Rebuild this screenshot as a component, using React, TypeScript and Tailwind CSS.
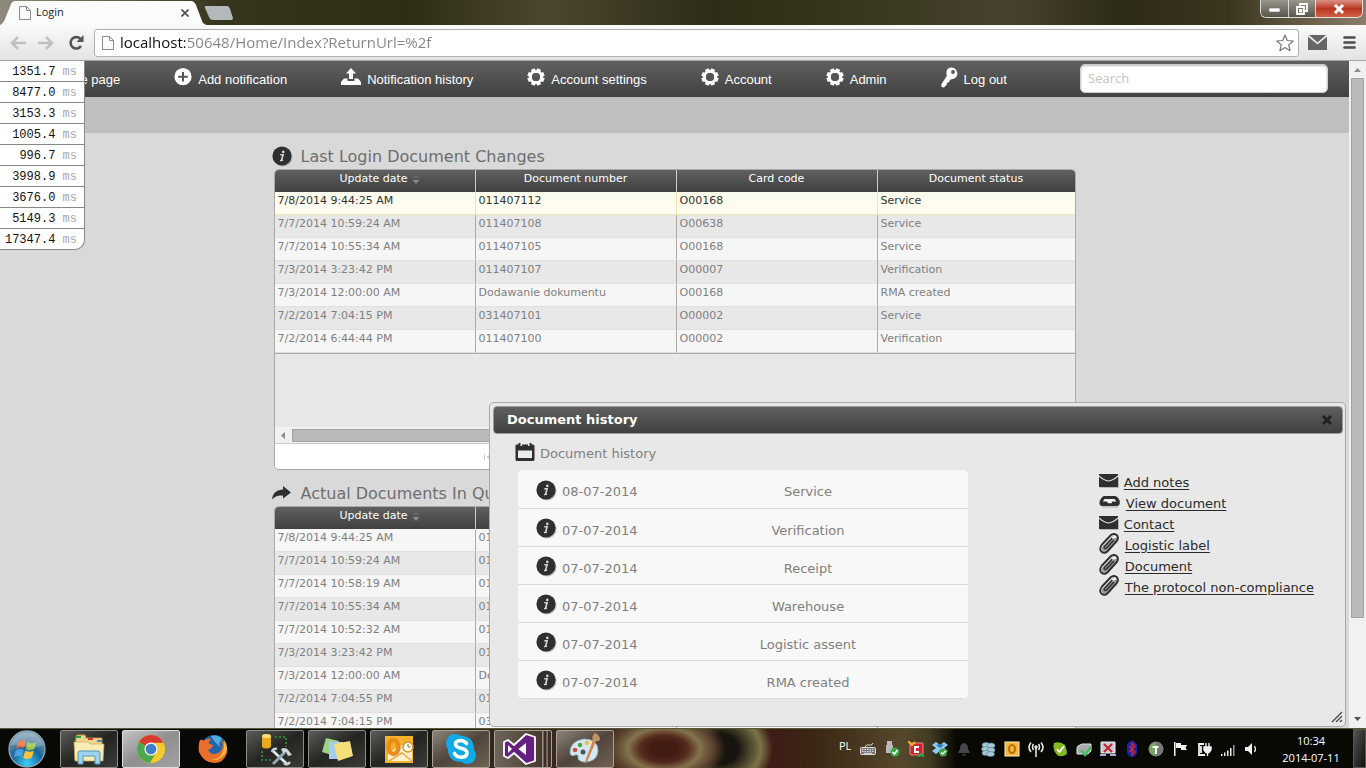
import { useState } from 'react'
import type { ReactNode } from 'react'
import clsx from 'clsx'

interface DocumentRow {
  updated: string
  number: string
  cardCode: string
  status: string
}

const timings = ['1351.7', '8477.0', '3153.3', '1005.4', '996.7', '3998.9', '3676.0', '5149.3', '17347.4']

const lastChanges: DocumentRow[] = [
  { updated: '7/8/2014 9:44:25 AM', number: '011407112', cardCode: 'O00168', status: 'Service' },
  { updated: '7/7/2014 10:59:24 AM', number: '011407108', cardCode: 'O00638', status: 'Service' },
  { updated: '7/7/2014 10:55:34 AM', number: '011407105', cardCode: 'O00168', status: 'Service' },
  { updated: '7/3/2014 3:23:42 PM', number: '011407107', cardCode: 'O00007', status: 'Verification' },
  { updated: '7/3/2014 12:00:00 AM', number: 'Dodawanie dokumentu', cardCode: 'O00168', status: 'RMA created' },
  { updated: '7/2/2014 7:04:15 PM', number: '031407101', cardCode: 'O00002', status: 'Service' },
  { updated: '7/2/2014 6:44:44 PM', number: '011407100', cardCode: 'O00002', status: 'Verification' },
]

const queue: DocumentRow[] = [
  { updated: '7/8/2014 9:44:25 AM', number: '011407112', cardCode: '', status: '' },
  { updated: '7/7/2014 10:59:24 AM', number: '011407108', cardCode: '', status: '' },
  { updated: '7/7/2014 10:58:19 AM', number: '011407108', cardCode: '', status: '' },
  { updated: '7/7/2014 10:55:34 AM', number: '011407105', cardCode: '', status: '' },
  { updated: '7/7/2014 10:52:32 AM', number: '011407105', cardCode: '', status: '' },
  { updated: '7/3/2014 3:23:42 PM', number: '011407107', cardCode: '', status: '' },
  { updated: '7/3/2014 12:00:00 AM', number: 'Dodawanie', cardCode: '', status: '' },
  { updated: '7/2/2014 7:04:55 PM', number: '011407100', cardCode: '', status: '' },
  { updated: '7/2/2014 7:04:15 PM', number: '031407101', cardCode: '', status: '' },
]

const history = [
  { date: '08-07-2014', status: 'Service' },
  { date: '07-07-2014', status: 'Verification' },
  { date: '07-07-2014', status: 'Receipt' },
  { date: '07-07-2014', status: 'Warehouse' },
  { date: '07-07-2014', status: 'Logistic assent' },
  { date: '07-07-2014', status: 'RMA created' },
]

/* ---------- page icons ---------- */

function InfoIcon() {
  return (
    <svg viewBox="0 0 21 21" className="h-[21px] w-[21px] shrink-0">
      <circle cx="11" cy="11" r="9.6" fill="#999" opacity="0.6" />
      <circle cx="10" cy="10" r="9.6" fill="#2e2f31" />
      <circle cx="11.3" cy="5.9" r="1.3" fill="#d9d4cd" />
      <path d="M8.3 8.8h2.8l-1.6 5.5h1.6" fill="none" stroke="#d9d4cd" strokeWidth="1.6" />
      <path d="M8 14.6h1.6" stroke="#d9d4cd" strokeWidth="1.2" />
    </svg>
  )
}

function ShareArrow() {
  return (
    <svg viewBox="0 0 20 16" className="h-4 w-5 shrink-0">
      <path d="M0 14.5C1 7.500 5 4.700 11 4.500V1l8 6.500-8 6V10.500C6 10 3 11 0 14.500z" fill="#2e2f31" />
    </svg>
  )
}

function CalendarIcon() {
  return (
    <svg viewBox="0 0 20 20" className="h-5 w-5 shrink-0">
      <path d="M1 2.500h2.500V1h2v3h1.500V2.500h6V4h1.500V1h2v1.500H18q1.500 0 1.500 1.500v13.500q0 1.500-1.500 1.500H2Q.5 19 .5 17.500V3.500z" fill="#2e2f31" />
      <rect x="3" y="8.500" width="14" height="7.500" fill="#ececec" />
    </svg>
  )
}

function EnvelopeIcon() {
  return (
    <svg viewBox="0 0 20 14" className="-mt-1 h-[14px] w-5 shrink-0">
      <path d="M0 0h19v13H0z" fill="#2e2f31" />
      <path d="M0 2q5 4.500 9.500 5Q14 6.500 19 2" fill="none" stroke="#e0e0e0" strokeWidth="1.100" />
      <path d="M1 13.500h18.500V3" fill="none" stroke="#aaa" strokeWidth="0.800" />
    </svg>
  )
}

function DriveIcon() {
  return (
    <svg viewBox="0 0 22 13" className="-mt-1 h-[13px] w-[22px] shrink-0">
      <path d="M5 1h11q2 0 3.500 2.500Q21 5.500 20.800 8q-.3 3-3 3H3.500Q.3 11 .5 8q0-2.500 1.500-4.500Q3.500 1 5 1z" fill="#2e2f31" />
      <path d="M5.500 4h10l2 2.500h-4l-1 1.700H9L8 6.500H3.800z" fill="#f1f1f1" />
      <path d="M3 12h16" stroke="#aaa" />
    </svg>
  )
}

function PaperclipIcon() {
  return (
    <svg viewBox="0 0 21 21" className="-mt-1 h-[21px] w-[21px] shrink-0" fill="none" strokeLinecap="round" strokeLinejoin="round">
      <path d="M6 15.500L15 6" stroke="#99978f" strokeWidth="6" />
      <path d="M3 11.500l9-9.500Q15-.2 18 2.200q2 3-.2 5.800l-9.500 10.500q-3 2.500-6 0-2.500-3 .7-7z" stroke="#2e2f31" strokeWidth="1.900" />
      <path d="M5 14l8-8.500M14.500 7.500L7.500 15q-1.700 1.200-2.500-1" stroke="#2e2f31" strokeWidth="1.400" />
      <path d="M14 4.500l2-.5" stroke="#fff" strokeWidth="2" />
    </svg>
  )
}

function PlusIcon() {
  return (
    <svg viewBox="0 0 18 18" className="h-[18px] w-[18px]">
      <circle cx="9" cy="8.700" r="8.600" fill="#fff" />
      <path d="M9 4v9.500M4.200 8.700h9.600" stroke="#555" strokeWidth="2" />
    </svg>
  )
}

function UploadIcon() {
  return (
    <svg viewBox="0 0 20 18" className="h-[18px] w-5">
      <path d="M10 0l5 5.500h-3V11H8V5.500H5z" fill="#fff" />
      <path d="M3 10.500h3.500V13h7v-2.500H17l3 3.500v3H0v-3z" fill="#fff" />
    </svg>
  )
}

function GearIcon() {
  return (
    <svg viewBox="0 0 18 18" className="h-[18px] w-[18px]">
      <g stroke="#fff" strokeWidth="4">
        <path d="M5.800 1l1.300 3.200M12.200 1l-1.300 3.200M5.800 17l1.300-3.200M12.200 17l-1.300-3.200" />
        <path d="M1 5.800l3.200 1.300M1 12.200l3.200-1.300M17 5.800l-3.200 1.300M17 12.200l-3.200-1.300" />
      </g>
      <circle cx="9" cy="9" r="5.600" fill="none" stroke="#fff" strokeWidth="3.200" />
      <circle cx="9" cy="9" r="4" fill="#555" />
    </svg>
  )
}

function KeyIcon() {
  return (
    <svg viewBox="0 0 17 21" className="h-[21px] w-[17px]">
      <path d="M7 1.500Q10-.5 13.500 1.200 17 3.500 16.300 7.500 15 12 10.500 12.200L8.800 13l-.6 2-1.800.6-.6 2L3 20.500.5 20 .3 17.200 5.800 9Q4.700 4.200 7 1.500z" fill="#fff" />
      <circle cx="12" cy="5" r="1.900" fill="#555" />
    </svg>
  )
}

function HouseIcon() {
  return (
    <svg viewBox="0 0 18 18" className="h-[18px] w-[18px]">
      <path d="M9 1l9 8h-3v8h-4v-5H7v5H3V9H0z" fill="#fff" />
    </svg>
  )
}

/* ---------- browser chrome ---------- */

function PageIcon() {
  return (
    <svg viewBox="0 0 12 16" className="h-4 w-3 shrink-0" fill="#fafafa" stroke="#8b8b8b">
      <path d="M.5 1.500h7l4 4v9h-11zM7.500 1.500v4h4" />
    </svg>
  )
}

function TabStrip() {
  return (
    <div className="relative flex h-[25px] shrink-0 bg-[linear-gradient(to_right,#8d897d,#85806f_2%,#37351d_16%,#302d15_30%,#4a4630_40%,#2f2c17_52%,#39361e_62%,#46422f_74%,#2d2a16_82%,#3b351f_90%,#8c7c6b)]">
      <svg viewBox="0 0 240 25" className="absolute left-0 top-0 h-[25px] w-60">
        <path d="M0 25Q3 24 5 19L11 4Q12 1 16 1H191Q194 1 196 5L202 21Q203 24 207 25z" fill="#fbfbfb" />
        <path d="M206 6h21q2 0 3 3l3 9q0 2-2 2h-18q-3 0-4-3l-4-9q-1-2 1-2z" fill="#b4b9bb" />
      </svg>
      <div className="relative flex w-[195px] items-center pl-[19px] font-['Open_Sans',sans-serif] text-[11px] text-[#1d1d1d]">
        <PageIcon />
        <span className="ml-[5px]">Login</span>
        <button type="button" aria-label="Close tab" className="ml-auto mr-1.5">
          <svg viewBox="0 0 8 8" className="h-2 w-2" stroke="#555" strokeWidth="1.800">
            <path d="M.5.5l7 7M7.500.5l-7 7" />
          </svg>
        </button>
      </div>
      <div className="relative ml-auto mr-[3px] flex h-[18px] overflow-hidden rounded-b-md border border-t-0 border-white/80 text-white">
        <button type="button" aria-label="Minimize" className="flex w-7 items-end justify-center border-r border-white/70 bg-linear-to-b from-[#99968c] to-[#59564a] pb-[5px]">
          <svg viewBox="0 0 11 4" className="h-1 w-[11px]"><rect width="11" height="4" rx="1" fill="#fff" stroke="#555" strokeWidth="0.500" /></svg>
        </button>
        <button type="button" aria-label="Restore" className="flex w-[27px] items-center justify-center border-r border-white/70 bg-linear-to-b from-[#99968c] to-[#59564a]">
          <svg viewBox="0 0 12 12" className="h-3 w-3" fill="none" stroke="#fff" strokeWidth="1.800">
            <path d="M4 3V1h7v7H9M1 4h7v7H1zM4 7h1.500v1.500H4z" />
          </svg>
        </button>
        <button type="button" aria-label="Close" className="flex w-[46px] items-center justify-center bg-linear-to-b from-[#d99184] via-[#b93520] to-[#d06045]">
          <svg viewBox="0 0 12 10" className="h-2.5 w-3" stroke="#fff" strokeWidth="3">
            <path d="M2 1l8 8M10 1L2 9" />
          </svg>
        </button>
      </div>
    </div>
  )
}

function Toolbar() {
  const [url, setUrl] = useState('localhost:50648/Home/Index?ReturnUrl=%2f')
  return (
    <div className="flex h-9 shrink-0 items-center border-b border-[#a5a5a5] bg-linear-to-b from-[#fafafa] to-[#e3e3e3] pl-2 pr-2.5">
      <button type="button" aria-label="Back" className="ml-0.5">
        <svg viewBox="0 0 16 14" className="h-[14px] w-4" fill="none" stroke="#c0c0c0" strokeWidth="2.500">
          <path d="M8 1L2 7l6 6M2 7h14" />
        </svg>
      </button>
      <button type="button" aria-label="Forward" className="ml-3">
        <svg viewBox="0 0 16 14" className="h-[14px] w-4" fill="none" stroke="#c0c0c0" strokeWidth="2.500">
          <path d="M8 1l6 6-6 6M14 7H0" />
        </svg>
      </button>
      <button type="button" aria-label="Reload" className="ml-3.5">
        <svg viewBox="0 0 16 16" className="h-4 w-4">
          <path d="M12.500 4A5.700 5.700 0 1 0 13 11" fill="none" stroke="#555" strokeWidth="2.600" />
          <path d="M15.500 0v7h-7z" fill="#555" />
        </svg>
      </button>
      <div className="ml-2.5 flex h-7 flex-1 items-center rounded-[3px] border border-[#b0b0b0] bg-white pl-[7px] pr-1">
        <PageIcon />
        <input
          aria-label="Address"
          value={url}
          onChange={(e) => setUrl(e.target.value)}
          className="ml-1.5 min-w-0 flex-1 bg-[linear-gradient(to_right,#111_65px,#848484_65px)] bg-clip-text pb-0.5 font-['Open_Sans',sans-serif] text-[15px] leading-6 text-transparent outline-none"
        />
        <svg viewBox="0 0 18 18" className="h-[18px] w-[18px]" fill="#fff" stroke="#777" strokeWidth="1.200" strokeLinejoin="round">
          <path d="M9 1l2.300 5.500 5.900.5-4.500 3.900 1.400 5.800L9 13.600l-5.100 3.100 1.400-5.800L.8 7l5.900-.5z" />
        </svg>
      </div>
      <svg viewBox="0 0 19 15" className="ml-[9px] h-[15px] w-[19px]" fill="#666">
        <path d="M1 0h17L9.500 7.500z" />
        <path d="M0 1.500l9.500 8 9.500-8V15H0z" />
      </svg>
      <button type="button" aria-label="Menu" className="ml-4">
        <svg viewBox="0 0 13 13" className="h-[13px] w-[13px]" stroke="#4c4c4c" strokeWidth="2.600" strokeLinecap="round">
          <path d="M1.500 1.500h10M1.500 6.500h10M1.500 11.500h10" />
        </svg>
      </button>
    </div>
  )
}

function PageScrollbar() {
  return (
    <div className="flex w-[17px] shrink-0 flex-col items-center bg-[#f1f1f1]">
      <svg viewBox="0 0 17 17" className="h-[17px] w-[17px]"><path d="M5 11l3.500-4 3.500 4z" fill="#8c8c8c" /></svg>
      <div className="w-[13px] grow-[540] border border-[#a3a3a3] bg-[#bababa]" />
      <div className="grow-[93]" />
      <svg viewBox="0 0 17 17" className="h-[17px] w-[17px]"><path d="M5 6l3.500 4L12 6z" fill="#505050" /></svg>
    </div>
  )
}

/* ---------- page ---------- */

function NavItem({ icon, label }: { icon: ReactNode; label: string }) {
  return (
    <a href="#" className="flex items-center gap-1.5 whitespace-nowrap">
      <span className="-mt-1">{icon}</span>
      <span className="pt-0.5">{label}</span>
    </a>
  )
}

function NavBar() {
  return (
    <nav className="flex h-9 items-center bg-linear-to-b from-[#606060] to-[#414141] pl-[29px] pr-[21px]">
      <div className="flex items-center gap-[54px] font-['Liberation_Sans',sans-serif] text-[13px] text-white">
        <NavItem icon={<HouseIcon />} label="Home page" />
        <NavItem icon={<PlusIcon />} label="Add notification" />
        <NavItem icon={<UploadIcon />} label="Notification history" />
        <NavItem icon={<GearIcon />} label="Account settings" />
        <NavItem icon={<GearIcon />} label="Account" />
        <NavItem icon={<GearIcon />} label="Admin" />
        <NavItem icon={<KeyIcon />} label="Log out" />
      </div>
      <input
        type="search"
        aria-label="Search"
        placeholder="Search"
        className="mb-0.5 ml-auto h-[29px] w-[248px] rounded-[5px] border border-[#ccc] bg-white px-[7px] font-['Open_Sans',sans-serif] text-[13px] shadow-[inset_0_1px_2px_#bbb] placeholder:text-[#c3c3c3]"
      />
    </nav>
  )
}

function Timings() {
  return (
    <ul className="absolute left-0 top-0 w-[85px] overflow-hidden rounded-br-[10px] border-b border-r border-[#888] bg-white font-['Liberation_Mono',monospace] text-[12px] leading-[18px]">
      {timings.map((value) => (
        <li key={value} className="border-b border-[#888] pr-[7px] pt-0.5 text-right text-[#111] last:border-b-0">
          {value} <span className="text-[#aaa]">ms</span>
        </li>
      ))}
    </ul>
  )
}

function SectionHeading({ icon, children }: { icon: ReactNode; children: ReactNode }) {
  return (
    <h2 className="-ml-0.5 flex h-9 items-center gap-2 pt-2.5 text-[16px] text-[#6e6e6e]">
      <span className="flex w-[21px]">{icon}</span>
      <span className="pt-0.5">{children}</span>
    </h2>
  )
}

function DocumentTable({ rows, highlightFirst }: { rows: DocumentRow[]; highlightFirst?: boolean }) {
  return (
    <table className="w-full table-fixed border-separate border-spacing-0 border-b border-[#aaa] text-[11px] leading-4">
      <colgroup>
        <col className="w-[201px]" />
        <col className="w-[201px]" />
        <col className="w-[201px]" />
        <col />
      </colgroup>
      <thead>
        <tr className="text-white">
          {['Update date', 'Document number', 'Card code', 'Document status'].map((name, i) => (
            <th
              key={name}
              className="h-[22px] border-r border-[#ccc] bg-linear-to-b from-[#606060] to-[#404040] p-0 pt-px align-top font-normal last:border-r-0"
            >
              <span className={clsx('inline-flex items-center gap-1', i === 0 && 'pl-2.5')}>
                {name}
                {i === 0 && (
                  <svg viewBox="0 0 8 10" className="h-2.5 w-2">
                    <path d="M.5 4L4 0l3.500 4z" fill="#666" />
                    <path d="M.5 6L4 10l3.500-4z" fill="#8a8a8a" />
                  </svg>
                )}
              </span>
            </th>
          ))}
        </tr>
      </thead>
      <tbody>
        {rows.map((row, i) => {
          const selected = highlightFirst && i === 0
          return (
            <tr
              key={row.updated}
              className={clsx(
                selected && 'bg-linear-to-b from-[#fbfbec] to-[#fffdf2] text-[#333]',
                !selected && (i % 2 ? 'bg-[#e8e8e8] text-[#808080]' : 'bg-[#f6f6f6] text-[#808080]'),
              )}
            >
              {[row.updated, row.number, row.cardCode, row.status].map((cell, c) => (
                <td
                  key={c}
                  className={clsx(
                    'h-[23px] overflow-hidden whitespace-nowrap border-b border-r p-0 pl-[3px] pt-px align-top last:border-r-0',
                    selected ? 'border-[#f1e6ae]' : 'border-r-[#aaa] border-b-[#e0e0e0]',
                  )}
                >
                  {cell}
                </td>
              ))}
            </tr>
          )
        })}
      </tbody>
    </table>
  )
}

function LastChanges() {
  return (
    <section>
      <SectionHeading icon={<InfoIcon />}>Last Login Document Changes</SectionHeading>
      <div className="flex h-[301px] flex-col overflow-hidden rounded-[5px] border border-[#aaa] bg-[#e8e8e8]">
        <div className="flex-1">
          <DocumentTable rows={lastChanges} highlightFirst />
        </div>
        <div className="flex h-4 items-center bg-[#f1f1f1] pr-4">
          <svg viewBox="0 0 17 15" className="h-[15px] w-[17px]"><path d="M10 4L6 7.500l4 3.500z" fill="#8c8c8c" /></svg>
          <div className="h-[13px] flex-1 border border-[#a3a3a3] bg-[#bababa]" />
        </div>
        <div className="flex h-[26px] items-center border-t border-[#ccc] bg-white pl-[209px]">
          <svg viewBox="0 0 10 6" className="h-1.5 w-2.5" stroke="#ccc" fill="#ccc">
            <path d="M.5 0v6" />
            <path d="M6 1L3 3l3 2z" />
          </svg>
        </div>
      </div>
    </section>
  )
}

function Queue() {
  return (
    <section>
      <SectionHeading icon={<ShareArrow />}>Actual Documents In Queue</SectionHeading>
      <div className="overflow-hidden rounded-t-[5px] border border-[#aaa]">
        <DocumentTable rows={queue} />
      </div>
    </section>
  )
}

function DialogLink({ icon, label }: { icon: ReactNode; label: string }) {
  return (
    <li className="flex h-[21px] items-center gap-[5px]">
      {icon}
      <a href="#" className="whitespace-nowrap underline underline-offset-2">{label}</a>
    </li>
  )
}

function HistoryDialog() {
  return (
    <div
      role="dialog"
      aria-labelledby="history-title"
      className="absolute bottom-px right-[3px] top-[341px] flex w-[857px] flex-col rounded-[5px] border border-[#aaa] bg-[#e8e8e8] p-[3px] pr-0.5 text-[13px] leading-4 text-[#808080]"
    >
      <div className="flex h-7 shrink-0 items-center rounded-[4px] border border-[#999] bg-linear-to-b from-[#606060] to-[#404040] pl-[13px] pr-2.5">
        <h3 id="history-title" className="font-bold text-white">Document history</h3>
        <button type="button" aria-label="Close dialog" className="ml-auto">
          <svg viewBox="0 0 10 10" className="h-2.5 w-2.5" stroke="#222" strokeWidth="3">
            <path d="M1 1l8 8M9 1L1 9" />
          </svg>
        </button>
      </div>
      <div className="flex justify-between pl-[22px] pr-[29px] pt-2">
        <div>
          <h4 className="flex items-center gap-[5px]">
            <CalendarIcon />
            <span className="pt-1">Document history</span>
          </h4>
          <ul className="ml-[3px] mt-2 w-[450px] overflow-hidden rounded-[5px] bg-[#f8f8f8]">
            {history.map((entry) => (
              <li key={entry.status} className="flex h-[39px] items-center border-b border-[#dcdcdc] pl-[18px] pt-1.5 not-first:h-[38px]">
                <span className="-mt-1"><InfoIcon /></span>
                <span className="ml-[5px]">{entry.date}</span>
                <span className="ml-auto w-80 text-center">{entry.status}</span>
              </li>
            ))}
          </ul>
        </div>
        <ul className="pt-[30px] text-[#2b2b2b]">
          <DialogLink icon={<EnvelopeIcon />} label="Add notes" />
          <DialogLink icon={<DriveIcon />} label="View document" />
          <DialogLink icon={<EnvelopeIcon />} label="Contact" />
          <DialogLink icon={<PaperclipIcon />} label="Logistic label" />
          <DialogLink icon={<PaperclipIcon />} label="Document" />
          <DialogLink icon={<PaperclipIcon />} label="The protocol non-compliance" />
        </ul>
      </div>
      <svg viewBox="0 0 12 12" className="ml-auto mt-auto h-3 w-3" stroke="#444" strokeWidth="1.200">
        <path d="M1 11L11 1M5 11l6-6M9 11l2-2" />
      </svg>
    </div>
  )
}

/* ---------- taskbar ---------- */

function StartOrb() {
  return (
    <svg viewBox="0 0 40 40" className="h-10 w-10">
      <defs>
        <radialGradient id="orb" cx="50%" cy="90%" r="85%">
          <stop offset="0" stopColor="#3bd0f8" />
          <stop offset="0.500" stopColor="#1b6399" />
          <stop offset="1" stopColor="#8aa5b5" />
        </radialGradient>
      </defs>
      <circle cx="20" cy="20" r="18" fill="url(#orb)" stroke="#8aa6b7" strokeWidth="1.300" />
      <path d="M11 13q4-3 8-.8l-2 7q-4-2-8 .5z" fill="#e8652c" />
      <path d="M20.500 13q4 2.400 9 0l-2.200 7q-4.600 2.500-8.500.2z" fill="#95c33c" />
      <path d="M8.600 21.400q4-2.500 8-.5l-2 7q-4-2-8 .5z" fill="#47a3e4" />
      <path d="M18.200 21.700q4.500 2.300 8.700 0l-2.200 7q-4.500 2.500-8.500 0z" fill="#fcc43c" />
      <path d="M4 16Q8 4 20 4t16 12q-8 4-16 2T4 16z" fill="#fff" opacity="0.220" />
    </svg>
  )
}

function ExplorerIcon() {
  return (
    <svg viewBox="0 0 34 32" className="h-8 w-[34px]">
      <path d="M4 4q0-2 2-2h7l1 3h16v22H3z" fill="#edd58c" stroke="#b99948" />
      <path d="M4 3h5v2H4z" fill="#2c9e44" /><path d="M16 5h5v2h-5z" fill="#cc3c2c" /><path d="M25 7h5v2h-5z" fill="#3a88cc" />
      <path d="M2 9h14l2 2h14l-1 17H3z" fill="#f8ebb3" stroke="#caaa5a" strokeWidth="0.700" />
      <path d="M6 31V20q0-2 2-2h18q2 0 2 2v11h-5v-8H11v8z" fill="#9fd3ec" stroke="#5398bd" />
    </svg>
  )
}

function ChromeIcon() {
  return (
    <svg viewBox="0 0 30 30" className="h-[30px] w-[30px]">
      <circle cx="15" cy="15" r="14" fill="#f4cb2c" />
      <path d="M15 15L2.900 8A14 14 0 0 1 27.500 8.700H15z" fill="#d93b30" />
      <path d="M2.900 8A14 14 0 0 0 14 29l6-10.500-5-3.500z" fill="#4aa84d" />
      <circle cx="15" cy="15" r="6.600" fill="#f4f4f4" />
      <circle cx="15" cy="15" r="5.300" fill="#3d7fc6" />
    </svg>
  )
}

function FirefoxIcon() {
  return (
    <svg viewBox="0 0 32 32" className="h-8 w-8">
      <circle cx="17" cy="15" r="13" fill="#1f66ac" />
      <path d="M14 3q8-2 11 3-4 4-2 8l-5-5z" fill="#51aee0" />
      <path d="M3 7q2-1 4 1 3-3 7-2-3 3-2 5 4 0 4 2-2 3-5 4 2 4 7 4 5-1 7-5 2-6-2-10 9 6 7 14-3 10-13 10T2 19Q1 12 3 7z" fill="#e8702a" />
      <path d="M27 7q6 9-1 16-5 5-12 4 10-1 12-9 2-5 1-11z" fill="#f9bd38" />
    </svg>
  )
}

function ToolsIcon() {
  return (
    <svg viewBox="0 0 34 34" className="h-[34px] w-[34px]" fill="none">
      <path d="M17 5h11v10M4 19v9h10" stroke="#2d9b3c" strokeWidth="1.600" strokeDasharray="2 2" />
      <path d="M4 4v11q4 3 9 0V4z" fill="#eaaa20" /><ellipse cx="8.500" cy="4" rx="4.500" ry="2" fill="#ffdf78" />
      <path d="M15 19l14 13" stroke="#dce6ed" strokeWidth="2.800" />
      <path d="M14 20q1-4 5-3M26 31q3 3 6-1" stroke="#c4d1da" strokeWidth="2.500" />
      <path d="M27 20L15 32" stroke="#91a6b8" strokeWidth="3" />
      <path d="M23 17q5-3 8 2l3 4-4 1-2-4-3 1z" fill="#cdd5dc" />
    </svg>
  )
}

function NotesIcon() {
  return (
    <svg viewBox="0 0 34 28" className="h-7 w-[34px]">
      <path d="M6 3l13 3-4 15-13-4z" fill="#9ed08a" />
      <path d="M9 7h14v17H9z" fill="#a4cdee" />
      <path d="M14 9l16-3 3 15-15 5z" fill="#f6df78" />
    </svg>
  )
}

function OutlookIcon() {
  return (
    <svg viewBox="0 0 30 30" className="h-[30px] w-[30px]">
      <path d="M1 2h28v27H1z" fill="#f3b12e" />
      <path d="M4 20l12-9h12v16H4z" fill="#fff1cc" />
      <ellipse cx="9.500" cy="13" rx="5" ry="7" fill="none" stroke="#e88d18" strokeWidth="4.500" />
      <path d="M5 27l13-8 10 8" fill="none" stroke="#e6aa48" strokeWidth="1.500" />
      <circle cx="24" cy="13" r="5" fill="#fffdf3" stroke="#d5902c" strokeWidth="1.500" />
      <path d="M24 10V13h2.500" fill="none" stroke="#966824" />
    </svg>
  )
}

function SkypeIcon() {
  return (
    <svg viewBox="0 0 30 30" className="h-[30px] w-[30px]">
      <path d="M9 0q4 0 6 2 13 0 13 14 2 2 2 5-1 9-9 9-3 0-5-2-14 0-14-13Q0 13 0 9 1 0 9 0z" fill="#0fabe8" />
      <path d="M20.500 9.500Q18 6.500 14.500 6.500 9.500 6.700 9.500 10q0 3 5.500 4.200 6 1.300 6 5-.5 4-6 4-4.500 0-6.500-3.700" fill="none" stroke="#fff" strokeWidth="3.600" strokeLinecap="round" />
    </svg>
  )
}

function VisualStudioIcon() {
  return (
    <svg viewBox="0 0 34 32" className="h-8 w-[34px]">
      <path d="M23 1l9 3v24l-9 3-12-11-6 5-4-2V9l4-2 6 5z" fill="#662180" stroke="#fff" strokeWidth="1.800" strokeLinejoin="round" />
      <path d="M23 10v12l-7.500-6zM5 12l4 4-4 4z" fill="#fff" />
    </svg>
  )
}

function PaintIcon() {
  return (
    <svg viewBox="0 0 34 32" className="h-8 w-[34px]">
      <path d="M2 20Q2 8 16 6q14 0 14 12-1 11-14 11-6-1-6-4 1-4-3-3-4 2-5-2z" fill="#d5e8f2" stroke="#92b5ca" />
      <circle cx="7" cy="17" r="2.300" fill="#cf4e38" /><circle cx="12" cy="12" r="2.300" fill="#55a344" /><circle cx="19" cy="10" r="2.300" fill="#eec044" />
      <circle cx="15" cy="19" r="2.500" fill="#47555c" />
      <path d="M28 8l-9 21-2 2 1-5 7-19z" fill="#d2844d" />
      <path d="M25 8q-2-5 2-8 5 2 5 7-3 2-7 1z" fill="#c39263" />
    </svg>
  )
}

interface TaskProps {
  label: string
  icon: ReactNode
  tone?: 'plain' | 'active' | 'warm' | 'bare' | 'stacked'
}

const tones = {
  plain: 'border-[#8d8d88] bg-linear-to-br from-[#5c5c59] via-[#242421] to-[#3b3b37]',
  active: 'border-[#ddd] bg-linear-to-br from-[#c6c6c6] via-[#8f8f8f] to-[#a2a2a2]',
  warm: 'border-[#aaa093] bg-linear-to-br from-[#8b847a] via-[#51443a] to-[#6f6254]',
  stacked: 'border-[#aaa093] bg-[linear-gradient(to_right,#6d655b,#47392f_84%,#aaa093_85%,#3c2d26_88%,#3c2d26_91%,#aaa093_93%,#3c2d26_95%)] pr-1.5',
  bare: 'border-transparent',
}

function Task({ label, icon, tone = 'plain' }: TaskProps) {
  return (
    <button
      type="button"
      aria-label={label}
      className={clsx('flex h-[38px] w-[58px] items-center justify-center rounded-[2px] border', tones[tone])}
    >
      {icon}
    </button>
  )
}

const trayIcons: ReactNode[] = [
  <g fill="none" stroke="#ddd"><rect x="0.500" y="6.500" width="15" height="7" rx="1" fill="#777" /><path d="M2 8.500h12M2 10.500h12" strokeDasharray="1.500 1" /><path d="M4 12.300h8" /><path d="M5 6Q6 3 9 4t4-2" /></g>,
  <g><path d="M3 0h5v4H3zM2 4h7v8H2z" fill="#bbb" /><circle cx="11" cy="11" r="4.500" fill="#39a843" /><path d="M8.500 11l2 2 3-4" fill="none" stroke="#fff" strokeWidth="1.500" /></g>,
  <g><rect x="2" y="2" width="13" height="12" rx="1" fill="#cd2530" stroke="#e98c83" /><path d="M11 6H7v5h4" fill="none" stroke="#fff" strokeWidth="2" /><path d="M0 0l4 4 3-3" fill="none" stroke="#f2b22c" strokeWidth="2" /><path d="M10 16l3-3 3 3" fill="none" stroke="#33a33e" strokeWidth="2" /></g>,
  <g><path d="M4 1l4 3 4-3 4 3-4 3 4 3-4 3-4-3-4 3-4-3 4-3-4-3z" fill="#8fcbf0" /><path d="M4 4l4-1 4 1-4 3z" fill="#2f7cb5" /><circle cx="11" cy="11.500" r="4" fill="#39a843" /><path d="M9 11.500l1.500 1.500 3-3" fill="none" stroke="#fff" strokeWidth="1.300" /></g>,
  <path d="M8 2q4 1 4 6l2 4H2l2-4q0-5 4-6zM6.500 13h3v1.500h-3z" fill="#474747" />,
  <g fill="#a5cad9" stroke="#5c7d8c" strokeWidth="0.600"><ellipse cx="6" cy="4" rx="4" ry="2.500" /><ellipse cx="11" cy="4.500" rx="4" ry="2.500" /><ellipse cx="5.500" cy="8" rx="4" ry="2.500" /><ellipse cx="11" cy="9" rx="4" ry="2.500" /><ellipse cx="6" cy="12" rx="4" ry="2.500" /><ellipse cx="10.500" cy="13" rx="4" ry="2.500" /></g>,
  <g><rect x="1" y="1" width="14" height="14" fill="#f5b637" stroke="#fff0c4" /><ellipse cx="8" cy="8" rx="3" ry="4" fill="none" stroke="#b56e12" strokeWidth="2" /></g>,
  <g fill="none" stroke="#eee" strokeWidth="1.500"><path d="M8 6v10M5.500 3q-2 3 0 6M10.500 3q2 3 0 6M3 1.500q-4 5 0 9.500M13 1.500q4 5 0 9.500" /><circle cx="8" cy="6" r="1" /></g>,
  <g><path d="M2 2q6-2 11 2 2 5 2 9-5 4-10 1Q0 8 2 2z" fill="#82b91e" /><path d="M5 8l2.500 3L12 5" fill="none" stroke="#fff" strokeWidth="1.800" /></g>,
  <g><path d="M2 5l4-2h9v7l-3 3H1V7z" fill="#a9acaa" stroke="#e3e3e3" /><path d="M5 9l4 5 6-8" fill="none" stroke="#40bd5d" strokeWidth="2.300" /></g>,
  <g><path d="M1 1h14v11H1z" fill="#c9c9d9" stroke="#eee" /><path d="M4 3l8 8M12 3l-8 8" stroke="#cc1d29" strokeWidth="2" /><path d="M0 14h6M10 14h6" stroke="#aaaadd" strokeWidth="2" /></g>,
  <g><rect x="3" y="0" width="10" height="16" rx="5" fill="#1426a5" /><path d="M5 5l6 6-3 3V2l3 3-6 6" fill="none" stroke="#cf2635" strokeWidth="1.400" /></g>,
  <g><circle cx="8" cy="8" r="7" fill="#74a966" stroke="#888" /><path d="M8 1a7 7 0 0 1 0 14z" fill="#777" /><path d="M4.500 6h6M8 5v8" stroke="#fff" strokeWidth="2" /></g>,
  <path d="M2 1h1.500v14H2zM4 2h5v2h6l-1.500 3L15 9H9V7H4z" fill="#f3f3f3" />,
  <g fill="none" stroke="#f0f0f0" strokeWidth="1.400"><path d="M8 3H3v11h6M5 5v7" strokeWidth="1.800" /><path d="M8 6h7v3l-2 2.500h-3L8 9z" fill="#f0f0f0" /><path d="M10 2v4M13 2v4M11.500 11v4" /></g>,
  <g><path d="M1 13h1.500v2H1zM4 11.500h1.500V15H4zM7 9.500h1.500V15H7zM10 7h1.500v8H10z" fill="#eee" /><path d="M13 4h1.500v11H13z" fill="#999" /></g>,
  <g><path d="M1 6h3l4-4v12l-4-4H1z" fill="#f3f3f3" /><path d="M10.500 5q2 3 0 6" fill="none" stroke="#eee" strokeWidth="1.300" /></g>,
]

function Taskbar() {
  return (
    <footer className="flex h-10 shrink-0 items-center border-t border-[#565735] bg-[radial-gradient(ellipse_62px_36px_at_664px_20px,#421b13_20%,#56291d_38%,#82734c_58%,#5f4631_78%,transparent),radial-gradient(ellipse_60px_50px_at_720px_20px,#17130e_30%,#7a7347_68%,transparent_88%),linear-gradient(to_right,#080904_28%,#302620_36%,#40291d_44%,#3e1d16_57%,#3b2915_60%,#55472c_66%,#433c24_68%,#090904_70%)]">
      <button type="button" aria-label="Start" className="mx-[7px]">
        <StartOrb />
      </button>
      <div className="ml-1.5 flex gap-1">
        <Task label="Explorer" icon={<ExplorerIcon />} />
        <Task label="Chrome" icon={<ChromeIcon />} tone="active" />
        <Task label="Firefox" icon={<FirefoxIcon />} tone="bare" />
        <Task label="Server tools" icon={<ToolsIcon />} />
        <Task label="Sticky notes" icon={<NotesIcon />} />
        <Task label="Outlook" icon={<OutlookIcon />} />
        <Task label="Skype" icon={<SkypeIcon />} tone="warm" />
        <Task label="Visual Studio" icon={<VisualStudioIcon />} tone="stacked" />
        <Task label="Paint" icon={<PaintIcon />} tone="warm" />
      </div>
      <div className="ml-auto flex h-full items-center font-['Open_Sans',sans-serif] text-[11px] text-white">
        <span className="w-[17px] pb-1">PL</span>
        {trayIcons.map((icon, i) => (
          <svg key={i} viewBox="0 0 16 16" className="mx-1 h-4 w-4">{icon}</svg>
        ))}
        <div className="ml-[5px] w-[84px] text-center leading-[17px]">
          <div>10:34</div>
          <div>2014-07-11</div>
        </div>
        <button type="button" aria-label="Show desktop" className="h-full w-[13px] border border-[#56564c] bg-linear-to-br from-[#555] to-[#111]" />
      </div>
    </footer>
  )
}

export default function App() {
  return (
    <div className="flex h-screen flex-col overflow-hidden font-['DejaVu_Sans',Verdana,sans-serif]">
      <TabStrip />
      <Toolbar />
      <div className="flex min-h-0 flex-1">
        <main className="relative min-w-0 flex-1 overflow-hidden bg-[#d9d9d9]">
          <NavBar />
          <div className="h-9 bg-[#bfbfbf]" />
          <div className="mx-auto w-[802px]">
            <LastChanges />
            <Queue />
          </div>
          <Timings />
          <HistoryDialog />
        </main>
        <PageScrollbar />
      </div>
      <Taskbar />
    </div>
  )
}
